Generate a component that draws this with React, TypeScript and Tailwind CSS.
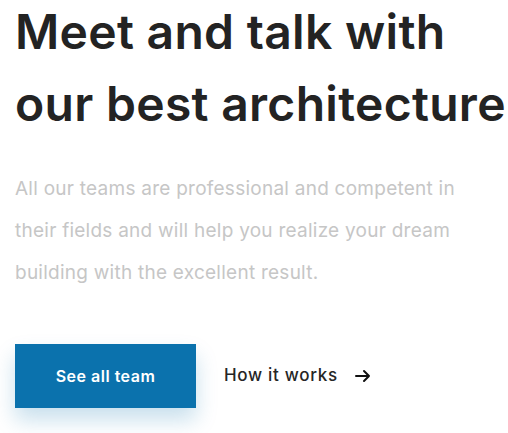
export default function App() {
  return (
    <div className="w-[508px] h-[433px] overflow-hidden bg-white pl-[15px]" style={{ fontFamily: 'Inter, "Noto Sans", sans-serif' }}>
      <h1 className="mt-[-4px] text-[48px] leading-[72px] font-semibold text-[#232323] tracking-[0.3px]">
        Meet and talk with
        <br />
        our best architecture
      </h1>
      <p className="mt-[28px] text-[19px] leading-[42px] text-[#c6c6c6] tracking-[0.25px] whitespace-nowrap">
        All our teams are professional and competent in
        <br />
        their fields and will help you realize your dream
        <br />
        building with the excellent result.
      </p>
      <div className="mt-[50px] flex items-center">
        <button className="w-[181px] h-[64px] bg-[#0b72ad] text-white text-[16px] font-semibold tracking-[0.5px] shadow-[0_12px_20px_rgba(11,114,173,0.22)]">
          See all team
        </button>
        <div className="ml-[28px] flex items-center text-[17px] font-medium text-[#262626] tracking-[0.7px]">
          How it works
          <svg className="ml-[17px]" width="16" height="14" viewBox="0 0 16 14" fill="none" stroke="#111" strokeWidth="2" strokeLinecap="round" strokeLinejoin="round">
            <path d="M1 7h13M9 2l5 5-5 5" />
          </svg>
        </div>
      </div>
    </div>
  );
}
